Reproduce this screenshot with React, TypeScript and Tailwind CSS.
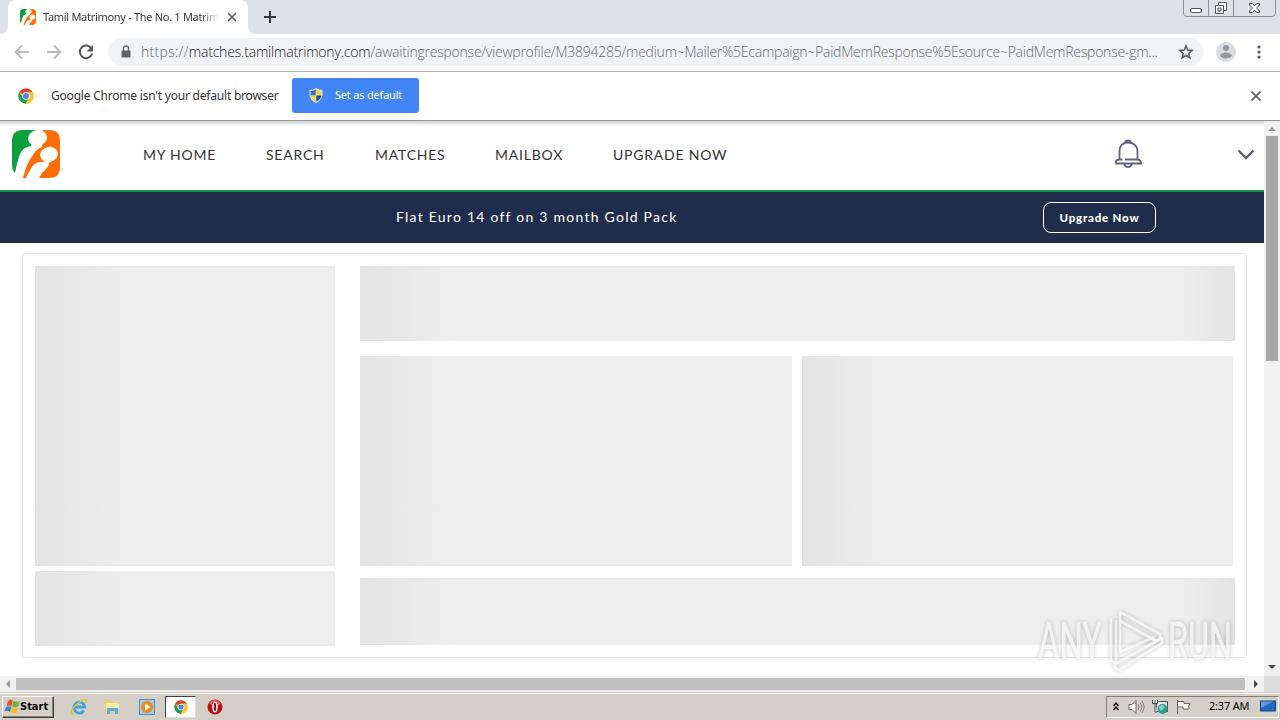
import type { ReactNode } from 'react';

const navItems = [
  { label: 'MY HOME', width: 'w-[123px]' },
  { label: 'SEARCH', width: 'w-[109px]' },
  { label: 'MATCHES', width: 'w-[120px]' },
  { label: 'MAILBOX', width: 'w-[118px]' },
  { label: 'UPGRADE NOW', width: 'w-[130px]' },
];

function ChromeLogo({ size = 16 }: { size?: number }) {
  return (
    <svg width={size} height={size} viewBox="0 0 48 48" className="shrink-0">
      <circle cx="24" cy="24" r="23" fill="#fbc62d" />
      <path d="M24 24 4 12.6A23 23 0 0 1 44 13H24Z" fill="#dc4437" />
      <path d="M4 12.6A23 23 0 0 0 23.5 47L33.5 29.5 24 24 14.5 29.5Z" fill="#1b9e58" />
      <path d="M24 13h20a23 23 0 0 1-20.5 34l10-17.5Z" fill="#fbc62d" />
      <circle cx="24" cy="24" r="11.5" fill="#fff" />
      <circle cx="24" cy="24" r="8.8" fill="#4a86e8" />
    </svg>
  );
}

function MatrimonyLogo({ size }: { size: number }) {
  return (
    <svg width={size} height={size} viewBox="0 0 48 48" className="shrink-0">
      <path d="M11 0h14l-6 16q-8 1-11 8Q5 32 3 43 0 40 0 35V11Q0 0 11 0Z" fill="#0aa13c" />
      <path d="M31 0h6q11 0 11 11v26q0 11-11 11H27q2-5 7-9 3-3 4-8l-9 1q-6 0-9 5-4 6-6 11h-3q3-14 10-23 3-6 9-8Z" fill="#ff6d05" />
      <ellipse cx="25.5" cy="8" rx="9.500" ry="8" transform="rotate(-15 25.500 8)" fill="#fff" />
      <ellipse cx="37" cy="24.500" rx="9" ry="7.500" transform="rotate(-15 37 24.500)" fill="#fff" />
    </svg>
  );
}

function TabStrip() {
  return (
    <div className="flex h-[34px] shrink-0 items-start bg-[#dee1e6]">
      <div className="h-full w-2 bg-white">
        <div className="h-full rounded-br-lg bg-[#dee1e6]" />
      </div>
      <div className="h-full bg-[#dee1e6]">
        <div className="flex h-full w-60 items-center rounded-t-lg bg-white pl-3">
          <MatrimonyLogo size={16} />
          <div className="ml-[7px] w-[176px] whitespace-nowrap text-[11px] tracking-[-0.3px] text-[#35383c] [mask-image:linear-gradient(to_right,black_158px,transparent)]">
            Tamil Matrimony - The No. 1 Matrimo
          </div>
          <svg width="10" height="10" viewBox="0 0 10 10" className="ml-2" stroke="#5f6368" strokeWidth="1.7">
            <path d="m1 1 8 8M9 1 1 9" />
          </svg>
        </div>
      </div>
      <div className="h-full w-2 bg-white">
        <div className="h-full rounded-bl-lg bg-[#dee1e6]" />
      </div>
      <svg width="12" height="12" viewBox="0 0 12 12" className="ml-2 mt-[11px]" stroke="#33363a" strokeWidth="2">
        <path d="M6 0v12M0 6h12" />
      </svg>
      <svg width="94" height="18" viewBox="0 0 94 18" className="ml-auto mr-[3px]" fill="none">
        <path d="M.5 0v13q0 3.5 3.5 3.5h85q3.500 0 3.500-3.500V0M25.500 0v16M50.500 0v16" stroke="#8b8f98" />
        <rect x="7.500" y="8.500" width="11" height="4" rx="1.500" fill="#fff" stroke="#50555e" />
        <path d="M35.500 2.500h8v8h-3v3h-8v-8h3Z" fill="#fff" stroke="#50555e" />
        <path d="M35.500 5.500h5v5M35 8h3v3h-3Z" stroke="#50555e" />
        <path d="M66.500 3.500h3l2 2.500 2-2.500h3v1.500L73.500 8l3 3v1.500h-3l-2-2.500-2 2.500h-3V11l3-3-3-3Z" fill="#fff" stroke="#50555e" />
      </svg>
    </div>
  );
}

function Toolbar() {
  return (
    <div className="flex h-[38px] shrink-0 items-center border-b border-[#b3b3b3] bg-white pb-px pl-[14px]">
      <svg width="16" height="16" viewBox="0 0 16 16" fill="none" stroke="#babcbe" strokeWidth="1.8">
        <path d="M15 8H2M8 1.500 1.500 8 8 14.500" />
      </svg>
      <svg width="16" height="16" viewBox="0 0 16 16" fill="none" stroke="#babcbe" strokeWidth="1.8" className="ml-4">
        <path d="M1 8h13M8 1.500 14.500 8 8 14.500" />
      </svg>
      <svg width="16" height="16" viewBox="0 0 16 16" fill="none" className="ml-4">
        <path d="M13.500 4.500A6.300 6.300 0 1 0 14.200 9.500" stroke="#55585d" strokeWidth="2" />
        <path d="M15 1v6.500H8.500Z" fill="#55585d" />
      </svg>
      <div className="ml-[14px] flex h-7 w-[1096px] items-center rounded-full bg-[#f1f3f4] pl-3">
        <svg width="12" height="14" viewBox="0 0 12 14" fill="none">
          <rect x="1.500" y="5.500" width="9" height="7" rx="1" fill="#5f6368" />
          <path d="M3.500 6V3.500a2.500 2.500 0 0 1 5 0V6" stroke="#5f6368" strokeWidth="1.400" />
        </svg>
        <div className="-mt-px ml-[9px] whitespace-nowrap font-['Open_Sans','Noto_Sans',sans-serif] text-sm font-light text-[#686c71]">
          <span className="tracking-[0.3px]">https://</span>
          <span className="tracking-[-0.19px] text-[#202124]">matches.tamilmatrimony.com</span>
          <span className="tracking-[-0.24px]">
            /awaitingresponse/viewprofile/M3894285/medium~Mailer%5Ecampaign~PaidMemResponse%5Esource~PaidMemResponse-gm...
          </span>
        </div>
        <svg width="16" height="16" viewBox="0 0 16 16" fill="none" stroke="#55585d" strokeWidth="1.500" className="ml-auto mr-[10px]">
          <path d="m8 1.800 1.700 4.200 4.500.4-3.400 3 1 4.400L8 11.500l-3.800 2.300 1-4.400-3.400-3 4.500-.4Z" />
        </svg>
      </div>
      <svg width="20" height="20" viewBox="0 0 20 20" className="ml-3">
        <circle cx="10" cy="10" r="10" fill="#dcdddf" />
        <circle cx="10" cy="6" r="3" fill="#96999d" />
        <ellipse cx="10" cy="13.500" rx="5.800" ry="3" fill="#96999d" />
      </svg>
      <svg width="4" height="14" viewBox="0 0 4 14" fill="#55585d" className="ml-[21px]">
        <circle cx="2" cy="2" r="1.600" />
        <circle cx="2" cy="7" r="1.600" />
        <circle cx="2" cy="12" r="1.600" />
      </svg>
    </div>
  );
}

function InfoBar() {
  return (
    <div className="flex h-[49px] shrink-0 items-center border-b border-[#969396] bg-white pb-px pl-[18px]">
      <ChromeLogo size={16} />
      <span className="ml-[17px] w-[241px] whitespace-nowrap text-[12px] tracking-[-0.21px] text-[#333]">
        Google Chrome isn't your default browser
      </span>
      <button className="flex h-[35px] w-[127px] items-center rounded-[3px] bg-[#4285f4] pl-[17px] text-[11px] text-white">
        <svg width="14" height="15" viewBox="0 0 14 15" className="mr-3">
          <path d="M7 0q3 2 6.500 2v5q-.5 5-6.500 8Q1 12 .5 7V2Q4 2 7 0Z" fill="#d5dce8" />
          <path d="M6.700 1.500v6H1.600V3Q4.500 3 6.700 1.500Z" fill="#2f72c8" />
          <path d="M7.300 1.500v6h5.100V3Q9.500 3 7.300 1.500Z" fill="#f6d532" />
          <path d="M1.600 7.500h5.100v6Q2 11 1.600 7.500Z" fill="#f6d532" />
          <path d="M12.400 7.500H7.300v6q4.700-2.500 5.100-6Z" fill="#174d9c" />
        </svg>
        <span className="whitespace-nowrap tracking-[-0.2px]">Set as default</span>
      </button>
      <svg width="10" height="10" viewBox="0 0 10 10" className="ml-auto mr-[19px]" stroke="#5f6368" strokeWidth="1.800">
        <path d="m.5.5 9 9M9.500.5l-9 9" />
      </svg>
    </div>
  );
}

function SiteHeader() {
  return (
    <header className="flex h-[71px] shrink-0 items-center border-b-2 border-[#149845] bg-gradient-to-b from-[#cfcfcf] via-white via-[5px] to-white pl-3">
      <div className="-mt-1">
        <MatrimonyLogo size={48} />
      </div>
      <nav className="-mt-[2px] ml-[83px] flex font-[Lato,sans-serif] text-[14px] tracking-[0.78px] text-[#333]">
        {navItems.map((item) => (
          <a key={item.label} className={`whitespace-nowrap ${item.width}`}>
            {item.label}
          </a>
        ))}
      </nav>
      <svg width="28" height="30" viewBox="0 0 28 30" fill="none" stroke="#626284" strokeWidth="1.800" className="-mt-[3px] ml-[371px]">
        <path d="M5.500 20.500v-8.500C5.500 6.500 9 3.500 14 3.500s9.500 3 9.500 8.500v8.500M11 3.500Q11.500 1.500 14 1.500t3 2M1.500 24.500q0-4 4-4M11 20.500h12.500q3.500.5 3.500 4H1.500M10 25q1 3 4 3t4-3M5.500 20.500h3" />
      </svg>
      <svg width="18" height="12" viewBox="0 0 18 12" fill="none" stroke="#5b5976" strokeWidth="2.300" className="-mt-[2px] ml-[95px]">
        <path d="m1.500 1.500 7.500 7.500 7.500-7.500" />
      </svg>
    </header>
  );
}

function PromoBanner() {
  return (
    <div className="flex h-[51px] shrink-0 items-center bg-[#202c4b] pl-[396px] font-[Lato,sans-serif] text-white">
      <span className="-mt-[2px] w-[647px] whitespace-nowrap text-[14px] tracking-[1.24px]">Flat Euro 14 off on 3 month Gold Pack</span>
      <button className="h-[31px] w-[113px] whitespace-nowrap rounded-lg border border-white text-[11.5px] font-black tracking-[0.8px]">
        Upgrade Now
      </button>
    </div>
  );
}

function Block({ className }: { className: string }) {
  return <div className={`shrink-0 bg-[#eee] bg-gradient-to-r from-[#e3e3e3] ${className}`} />;
}

function ProfileSkeleton() {
  return (
    <div className="ml-[22px] mt-[10px] flex h-[405px] w-[1225px] gap-[25px] rounded border border-[#e2e5e8] p-3">
      <div className="flex w-[300px] shrink-0 flex-col gap-[5px]">
        <Block className="h-[300px] via-[#eee] via-30% to-[#eee]" />
        <Block className="h-[75px] via-[#eee] via-30% to-[#eee]" />
      </div>
      <div className="w-[875px] shrink-0">
        <div className="h-[75px] bg-[linear-gradient(to_right,#e3e3e3,#eee_90px,#eee_820px,#e4e4e4)]" />
        <div className="mt-[15px] flex gap-[10px]">
          <Block className="h-[210px] w-[432px] via-[#eee] via-20% to-[#eee]" />
          <Block className="h-[210px] w-[431px] via-[#eee] via-20% to-[#eee]" />
        </div>
        <div className="mt-3 h-[67px] bg-[linear-gradient(to_right,#e3e3e3,#eee_90px,#eee_820px,#e4e4e4)]" />
      </div>
    </div>
  );
}

function VerticalScrollbar() {
  return (
    <div className="flex w-4 shrink-0 flex-col items-center bg-[#f0f0f0]">
      <svg width="8" height="4" viewBox="0 0 8 4" className="mt-[6px]" fill="#999">
        <path d="M0 4 4 0l4 4Z" />
      </svg>
      <div className="mt-[5px] h-[225px] w-3 bg-[#a6a6a6]" />
      <svg width="8" height="4" viewBox="0 0 8 4" className="mb-[7px] mt-auto" fill="#444">
        <path d="m0 0 4 4 4-4Z" />
      </svg>
    </div>
  );
}

function HorizontalScrollbar() {
  return (
    <div className="flex h-4 shrink-0 items-center bg-[#f0f0f0]">
      <svg width="4" height="8" viewBox="0 0 4 8" className="ml-[6px]" fill="#999">
        <path d="M4 0 0 4l4 4Z" />
      </svg>
      <div className="ml-[6px] h-3 w-[1229px] bg-[#bfbfbf]" />
      <svg width="4" height="8" viewBox="0 0 4 8" className="ml-[9px]" fill="#444">
        <path d="m0 0 4 4-4 4Z" />
      </svg>
      <div className="ml-auto h-full w-4 bg-[#dcdcdc]" />
    </div>
  );
}

function Watermark() {
  return (
    <svg
      width="216"
      height="72"
      viewBox="0 0 216 72"
      fill="none"
      className="absolute left-[1034px] top-[605px] overflow-visible opacity-75 [filter:drop-shadow(0_0_2px_rgba(0,0,0,0.3))]"
    >
      <g fill="#f3f3f3" stroke="#f3f3f3" strokeWidth=".6" fontFamily="Roboto, sans-serif" fontSize="52">
        <text x="4" y="54" textLength="64" lengthAdjust="spacingAndGlyphs">ANY</text>
        <text x="134" y="54" textLength="64" lengthAdjust="spacingAndGlyphs">RUN</text>
      </g>
      <path
        d="M86 22V7l40 22v5l-4 2-36-20M86 22v25l34-15M77 13v43l5 2V15M85 57l43-24v5L85 65l-4-2v-4Z"
        stroke="#f5f5f5"
        strokeWidth="2.600"
        strokeLinejoin="round"
      />
    </svg>
  );
}

function TaskItem({ children, active }: { children: ReactNode; active?: boolean }) {
  return (
    <div
      className={`flex h-[22px] w-[31px] items-center justify-center ${active ? 'border border-b-[#ddd] border-l-[#404040] border-r-[#ddd] border-t-[#404040] bg-white' : ''}`}
    >
      {children}
    </div>
  );
}

function Taskbar() {
  return (
    <footer className="flex h-7 shrink-0 items-center border-t border-[#d4d0c8] bg-[#d4d0c8] pl-[2px] shadow-[inset_0_1px_0_#fff]">
      <button className="flex h-[22px] w-[52px] items-center border-b border-l border-r border-t border-b-[#404040] border-l-white border-r-[#404040] border-t-white pl-px text-[11.500px] font-bold text-black shadow-[inset_-1px_-1px_0_#858179]">
        <svg width="16" height="16" viewBox="0 0 16 16" className="shrink-0">
          <path d="M4 2q2-2 5-.5L7.500 7Q5 6 2.500 7Z" fill="#e65426" />
          <path d="M9.500 2q3 1.500 6 0L14 8q-3 1-6-.8Z" fill="#6db33f" />
          <path d="M2 8q3-1.500 5.500 0L6 13q-2-2-5.500-.5Z" fill="#3486cf" />
          <path d="M8 8q3 2 6 1l-1.500 5q-3 1-6-1Z" fill="#f7bd20" />
        </svg>
        <span className="mt-px font-['DejaVu_Sans_Condensed','DejaVu_Sans',sans-serif] text-[11px] tracking-[0px]">Start</span>
      </button>
      <div className="ml-[9px] flex items-center gap-[3px]">
        <TaskItem>
          <svg width="18" height="18" viewBox="0 0 18 18" fill="none">
            <path d="M14 12.500a5.500 5.500 0 1 1 .8-3.500H5" stroke="#3ca5df" strokeWidth="2.800" />
            <path d="M4 16c-4 1-4-3 1-8S16-1 16.500 2.500q0 1.500-1 3" stroke="#e9bd38" strokeWidth="1.400" />
          </svg>
        </TaskItem>
        <TaskItem>
          <svg width="17" height="17" viewBox="0 0 17 17">
            <path d="M1 2h6l1 2h7v11H1Z" fill="#edcc69" />
            <path d="M2 5h13v6H2Z" fill="#faeba8" />
            <path d="M3 16v-6h11v6h-3v-3H6v3Z" fill="#58aee0" />
          </svg>
        </TaskItem>
        <TaskItem>
          <svg width="16" height="16" viewBox="0 0 16 16">
            <rect x=".5" y=".5" width="15" height="15" fill="#9fcdf0" stroke="#4b8fc9" />
            <circle cx="8" cy="8" r="6" fill="#f28a18" />
            <path d="m6 4.500 5.500 3.500L6 11.500Z" fill="#fff" />
          </svg>
        </TaskItem>
        <TaskItem active>
          <ChromeLogo size={14} />
        </TaskItem>
        <TaskItem>
          <svg width="16" height="16" viewBox="0 0 16 16">
            <circle cx="8" cy="8" r="7.500" fill="#b51319" />
            <path d="M2 5a6.500 6.500 0 0 1 12 0Q8 8 2 5Z" fill="#dc5a59" />
            <ellipse cx="8" cy="8" rx="2.800" ry="5.500" fill="#fff" />
            <ellipse cx="8" cy="8" rx="1.200" ry="4.300" fill="#9d0b11" />
          </svg>
        </TaskItem>
      </div>
      <div className="ml-auto mr-px flex h-[22px] w-[173px] items-center border border-b-white border-l-[#808080] border-r-white border-t-[#808080] pl-1.5 text-[11px] text-black">
        <svg width="6" height="9" viewBox="0 0 6 9" fill="none" stroke="#000" strokeWidth="1.300">
          <path d="m.5 4 2.500-3 2.500 3M.5 8 3 5l2.500 3" />
        </svg>
        <svg width="17" height="16" viewBox="0 0 17 16" fill="none" className="ml-[9px]">
          <path d="M1 5.500h3l4-4v13l-4-4H1Z" fill="#fff" stroke="#666" />
          <path d="M10 5q2 3 0 6M12 3.500q3.500 4.500 0 9M14 2q4 6 0 12" stroke="#777" strokeWidth=".9" />
        </svg>
        <svg width="17" height="16" viewBox="0 0 17 16" className="ml-[7px]">
          <rect x="4.500" y="2.500" width="11" height="10" fill="#d9eced" stroke="#555" />
          <path d="M.5 1v3.500h5V1M3 1v3.500V13h2" fill="#fff" stroke="#444" />
          <circle cx="10.500" cy="10" r="5" fill="#2e9c95" />
          <path d="M7 8q4-4 5-1t-4 5Z" fill="#86cfb5" />
        </svg>
        <svg width="17" height="16" viewBox="0 0 17 16" className="ml-[6px]">
          <path d="M2.500 1v14M3 2.500h6v2h6q-2 2-1 5.500H8V8H3" fill="#fff" stroke="#666" />
        </svg>
        <span className="ml-[17px] w-[51px] whitespace-nowrap tracking-[-0.2px]">2:37 AM</span>
        <svg width="16" height="15" viewBox="0 0 16 15" className="shrink-0">
          <rect x=".5" y="2" width="15" height="10" fill="#2467be" stroke="#1d4379" />
          <path d="M1 2.500h12L1 9Z" fill="#5b9be3" />
          <path d="M4 13h8v1H4Z" fill="#bfd0e5" />
        </svg>
      </div>
    </footer>
  );
}

export default function App() {
  return (
    <div className="relative flex h-[720px] w-[1280px] flex-col overflow-hidden bg-white font-['Noto_Sans',sans-serif]">
      <TabStrip />
      <Toolbar />
      <InfoBar />
      <div className="flex h-[555px] shrink-0">
        <main className="flex w-[1264px] flex-col">
          <SiteHeader />
          <PromoBanner />
          <ProfileSkeleton />
        </main>
        <VerticalScrollbar />
      </div>
      <HorizontalScrollbar />
      <Taskbar />
      <Watermark />
    </div>
  );
}
